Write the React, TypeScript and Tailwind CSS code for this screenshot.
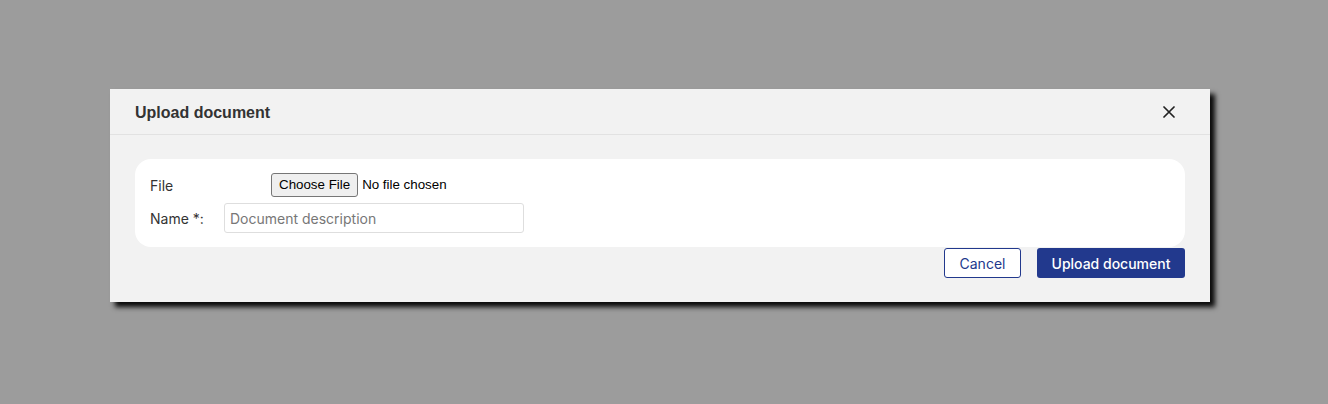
import React from "react";

export default function App() {
  return (
    <div className="w-[1328px] h-[404px] bg-[#9c9c9c] pt-[89px] pl-[110px] overflow-hidden" style={{ fontFamily: "Inter, 'Liberation Sans', sans-serif" }}>
      <div className="w-[1100px] bg-[#f2f2f2] shadow-[5px_5px_5px_rgba(0,0,0,0.95)]">
        <div className="h-[46px] flex items-center justify-between pl-[25px] pr-[35px] border-b border-[#e2e2e2]">
          <div className="text-[16px] font-bold text-[#333] pt-[2px]" style={{ fontFamily: "'Liberation Sans', Arial, sans-serif" }}>Upload document</div>
          <svg width="12" height="12" viewBox="0 0 12 12" fill="none" stroke="#222" strokeWidth="1.7" strokeLinecap="round" className="mt-[1px]">
            <path d="M1 1 L11 11 M11 1 L1 11" />
          </svg>
        </div>
        <div className="px-[25px] pt-[24px] pb-[24px]">
          <div className="bg-white rounded-[16px] h-[88px] px-[15px] pt-[16px] flex flex-col gap-[8px]">
            <div className="flex items-center h-[20px]">
              <div className="w-[121px] text-[14px] text-[#333]">File</div>
              <input type="file" className="text-[13.33px] text-black file:px-[7px] file:py-[1px] file:mr-[4px] file:border file:border-[#767676] file:rounded-[3px] file:bg-[#efefef] file:text-black" style={{ fontFamily: "'Liberation Sans', Arial, sans-serif" }} />
            </div>
            <div className="flex items-center">
              <div className="w-[74px] text-[14px] text-[#333]">Name *:</div>
              <input placeholder="Document description" className="w-[300px] h-[30px] border border-[#dedede] rounded-[3px] px-[5px] text-[14px] placeholder:text-[#777] outline-none" />
            </div>
          </div>
          <div className="flex justify-end gap-[16px] mt-[1px]">
            <button className="w-[77px] h-[30px] border border-[#22398d] rounded-[3px] bg-white text-[#22398d] text-[14px]">Cancel</button>
            <button className="w-[148px] h-[30px] rounded-[3px] bg-[#22398d] text-white text-[14px] font-medium">Upload document</button>
          </div>
        </div>
      </div>
    </div>
  );
}
